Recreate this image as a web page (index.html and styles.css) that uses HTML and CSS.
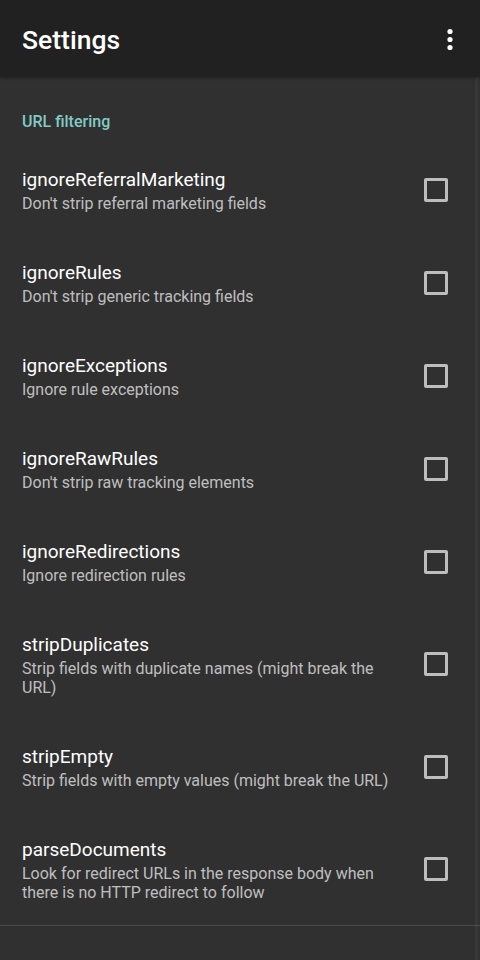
FILE: index.html
```html
<!DOCTYPE html>
<html>
<head>
<meta charset="utf-8">
<link rel="stylesheet" href="styles.css">
</head>
<body>
<div class="app">
  <header class="appbar">
    <h1 class="title">Settings</h1>
    <div class="menu">
      <svg width="8" height="24" viewBox="0 0 8 24"><circle cx="4" cy="4.5" r="2.6" fill="#fff"/><circle cx="4" cy="12.5" r="2.6" fill="#fff"/><circle cx="4" cy="20.5" r="2.6" fill="#fff"/></svg>
    </div>
  </header>
  <main class="content">
    <div class="category">URL filtering</div>
    <div class="item">
      <div class="text"><div class="name">ignoreReferralMarketing</div><div class="summary">Don't strip referral marketing fields</div></div>
      <span class="check"></span>
    </div>
    <div class="item">
      <div class="text"><div class="name">ignoreRules</div><div class="summary">Don't strip generic tracking fields</div></div>
      <span class="check"></span>
    </div>
    <div class="item">
      <div class="text"><div class="name">ignoreExceptions</div><div class="summary">Ignore rule exceptions</div></div>
      <span class="check"></span>
    </div>
    <div class="item">
      <div class="text"><div class="name">ignoreRawRules</div><div class="summary">Don't strip raw tracking elements</div></div>
      <span class="check"></span>
    </div>
    <div class="item">
      <div class="text"><div class="name">ignoreRedirections</div><div class="summary">Ignore redirection rules</div></div>
      <span class="check"></span>
    </div>
    <div class="item">
      <div class="text"><div class="name">stripDuplicates</div><div class="summary">Strip fields with duplicate names (might break the URL)</div></div>
      <span class="check"></span>
    </div>
    <div class="item">
      <div class="text"><div class="name">stripEmpty</div><div class="summary">Strip fields with empty values (might break the URL)</div></div>
      <span class="check"></span>
    </div>
    <div class="item">
      <div class="text"><div class="name">parseDocuments</div><div class="summary">Look for redirect URLs in the response body when there is no HTTP redirect to follow</div></div>
      <span class="check"></span>
    </div>
    <div class="divider"></div>
  </main>
  <div class="scrollbar"></div>
</div>
</body>
</html>
```
FILE: styles.css
```css
* { box-sizing: border-box; }
html, body { margin: 0; padding: 0; }
body {
  width: 480px;
  height: 960px;
  overflow: hidden;
  background: #303030;
  font-family: Roboto, "Noto Sans", sans-serif;
}
.app { position: relative; height: 960px; }
.appbar {
  height: 77px;
  background: #212121;
  display: flex;
  align-items: center;
  justify-content: space-between;
  padding: 0 26px 0 22px;
  box-shadow: 0 1px 3px rgba(0,0,0,0.35);
  position: relative;
  z-index: 1;
}
.title {
  margin: 0;
  font-size: 26.5px;
  font-weight: 500;
  color: #fff;
  line-height: 30px;
  padding-top: 2px;
}
.menu { display: flex; align-items: center; height: 24px; }
.menu svg { display: block; }
.content { display: flex; flex-direction: column; }
.category {
  padding: 35px 22px 11px;
  font-size: 16px;
  line-height: 20px;
  font-weight: 500;
  color: #80cbc4;
}
.item {
  display: flex;
  align-items: center;
  padding: 25px 32px 23px 22px;
  gap: 28px;
}
.text { flex: 1; min-width: 0; }
.name {
  font-size: 19px;
  line-height: 24px;
  color: #fff;
}
.summary {
  font-size: 16px;
  line-height: 19px;
  padding-top: 2px;
  color: rgba(255,255,255,0.7);
}
.check {
  width: 24px;
  height: 24px;
  border: 3px solid #bdbdbd;
  border-radius: 2px;
  flex: none;
  margin-top: -2px;
}
.divider { height: 1px; background: #4a4a4a; }
.scrollbar {
  position: absolute;
  right: 2px;
  top: 77px;
  width: 3px;
  height: 883px;
  background: rgba(255,255,255,0.04);
}
```
